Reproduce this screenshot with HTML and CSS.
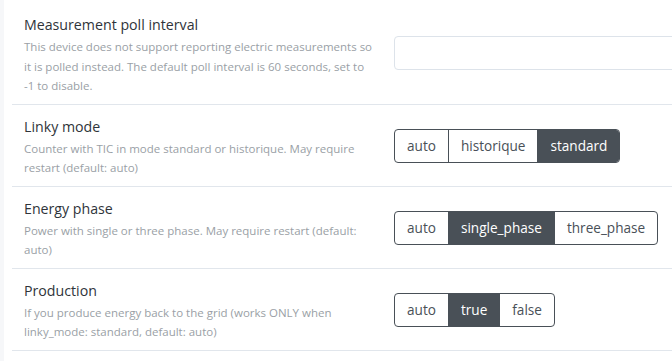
FILE: index.html
```html
<!DOCTYPE html>
<html lang="en">

<head>
	<meta charset="UTF-8">
	<title>Device settings</title>
	<link rel="stylesheet" href="styles.css">
</head>

<body>
	<div class="page">
		<div class="settings">
			<div class="row">
				<div class="info">
					<h3>Measurement poll interval</h3>
					<p>This device does not support reporting electric measurements so it is polled instead. The default poll interval is 60 seconds, set to -1 to disable.</p>
				</div>
				<div class="control">
					<input type="text" class="field">
				</div>
			</div>
			<div class="row">
				<div class="info">
					<h3>Linky mode</h3>
					<p>Counter with TIC in mode standard or historique. May require restart (default: auto)</p>
				</div>
				<div class="control">
					<div class="group">
						<a href="#">auto</a>
						<a href="#">historique</a>
						<a href="#" class="check">standard</a>
					</div>
				</div>
			</div>
			<div class="row">
				<div class="info">
					<h3>Energy phase</h3>
					<p>Power with single or three phase. May require restart (default: auto)</p>
				</div>
				<div class="control">
					<div class="group">
						<a href="#">auto</a>
						<a href="#" class="check">single_phase</a>
						<a href="#">three_phase</a>
					</div>
				</div>
			</div>
			<div class="row">
				<div class="info">
					<h3>Production</h3>
					<p>If you produce energy back to the grid (works ONLY when linky_mode: standard, default: auto)</p>
				</div>
				<div class="control">
					<div class="group">
						<a href="#">auto</a>
						<a href="#" class="check">true</a>
						<a href="#">false</a>
					</div>
				</div>
			</div>
		</div>
	</div>
</body>

</html>
```

FILE: styles.css
```css
html,
body {
	margin: 0;
	padding: 0;
}

body {
	background: #f6f7f9;
	font-family: "Open Sans", "Noto Sans", sans-serif;
	color: #343a40;
	overflow: hidden;
}

.page {
	margin-left: 4px;
	background: #fff;
	height: 361px;
	padding: 3px 0 0 8px;
}

.settings {
	width: 708px;
}

.row {
	display: grid;
	grid-template-columns: 352px 1fr;
	column-gap: 18px;
	align-items: center;
	padding: 10px 12px 8px;
	border-bottom: 1px solid #e1e6ec;
}

.info h3 {
	margin: 0;
	font-size: 14.2px;
	font-weight: 400;
	line-height: 24px;
	color: #2f343a;
}

.info p {
	margin: 0;
	font-size: 11.5px;
	line-height: 19.5px;
	color: #9a9fa6;
}

.field {
	box-sizing: border-box;
	width: 100%;
	height: 34px;
	border: 1px solid #dde3ea;
	border-radius: 4px;
	margin-bottom: 2px;
}

.group {
	display: inline-flex;
	border: 1px solid #495057;
	border-radius: 4px;
	overflow: hidden;
	margin-bottom: 1px;
}

.group a {
	display: block;
	font-size: 13.6px;
	line-height: 32px;
	padding: 0 12px;
	color: #495057;
	text-decoration: none;
	border-left: 1px solid #495057;
}

.group a:first-child {
	border-left: 0;
}

.group .check {
	background: #495057;
	color: #fff;
}
```
